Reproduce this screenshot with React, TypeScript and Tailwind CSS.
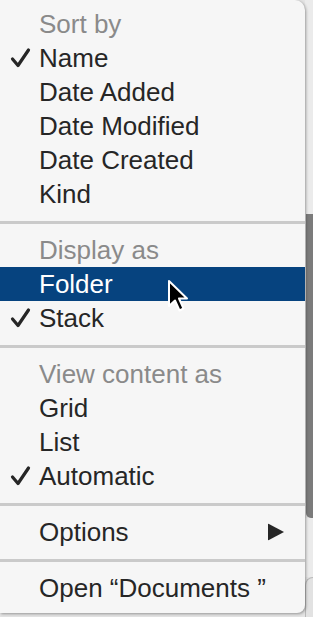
import React from "react";

const Check = () => (
  <svg width="21" height="21" viewBox="0 0 21 21" className="absolute left-[10px] top-1/2 -translate-y-1/2">
    <path d="M2.5 11.5 L8 18 L18.5 2.5" fill="none" stroke="#262626" strokeWidth="3.2" strokeLinecap="round" strokeLinejoin="round" />
  </svg>
);

function Header({ text }: { text: string }) {
  return (
    <div className="h-[34px] flex items-center pl-[39px] text-[#8a8a8a]">{text}</div>
  );
}

function Item({ text, checked, highlighted, arrow }: { text: string; checked?: boolean; highlighted?: boolean; arrow?: boolean }) {
  return (
    <div
      className={
        highlighted
          ? "relative h-[34px] flex items-center pl-[39px] bg-[#06437f] text-white"
          : "relative h-[34px] flex items-center pl-[39px] text-[#262626]"
      }
    >
      {checked && <Check />}
      <span>{text}</span>
      {arrow && (
        <svg width="16" height="17" viewBox="0 0 16 17" className="absolute left-[268px] top-1/2 -translate-y-1/2">
          <polygon points="0,0 16,8.5 0,17" fill="#262626" />
        </svg>
      )}
    </div>
  );
}

function Sep() {
  return (
    <div className="h-[22px] pt-[10px]">
      <div className="h-[3px] bg-[#cacaca]" />
    </div>
  );
}

export default function App() {
  return (
    <div className="relative w-[313px] h-[617px] overflow-hidden bg-[#e4e4e4] flex" style={{ fontFamily: '"Liberation Sans", Arial, sans-serif' }}>
      <div className="w-[305px] h-[613px] shrink-0 bg-[#f6f6f6] rounded-tr-[10px] rounded-br-[8px] shadow-[1px_1px_3px_rgba(0,0,0,0.35)] pt-[7px] text-[26px] leading-none z-10">
        <Header text="Sort by" />
        <Item text="Name" checked />
        <Item text="Date Added" />
        <Item text="Date Modified" />
        <Item text="Date Created" />
        <Item text="Kind" />
        <Sep />
        <Header text="Display as" />
        <Item text="Folder" highlighted />
        <Item text="Stack" checked />
        <Sep />
        <Header text="View content as" />
        <Item text="Grid" />
        <Item text="List" />
        <Item text="Automatic" checked />
        <Sep />
        <Item text="Options" arrow />
        <Sep />
        <Item text="Open “Documents ”" />
      </div>
      <div className="flex-1 flex flex-col">
        <div className="h-[214px] bg-[#ebebeb]" />
        <div className="h-[304px] ml-[1px] bg-[#7b7b7b] rounded-bl-[5px]" />
        <div className="h-[59px] bg-[#ebebeb]" />
        <div className="flex-1 bg-[#e2e2e2] border-l border-t border-[#b9b9b9] rounded-tl-[8px]" />
      </div>
      <svg width="22" height="34" viewBox="0 0 22 34" className="absolute left-[167px] top-[279px] z-20">
        <path d="M2 2 L2 27 L8 21.5 L12.5 31.5 L16.5 29.5 L12 19.5 L20 19.5 Z" fill="#000" stroke="#fff" strokeWidth="2" strokeLinejoin="round" />
      </svg>
    </div>
  );
}
